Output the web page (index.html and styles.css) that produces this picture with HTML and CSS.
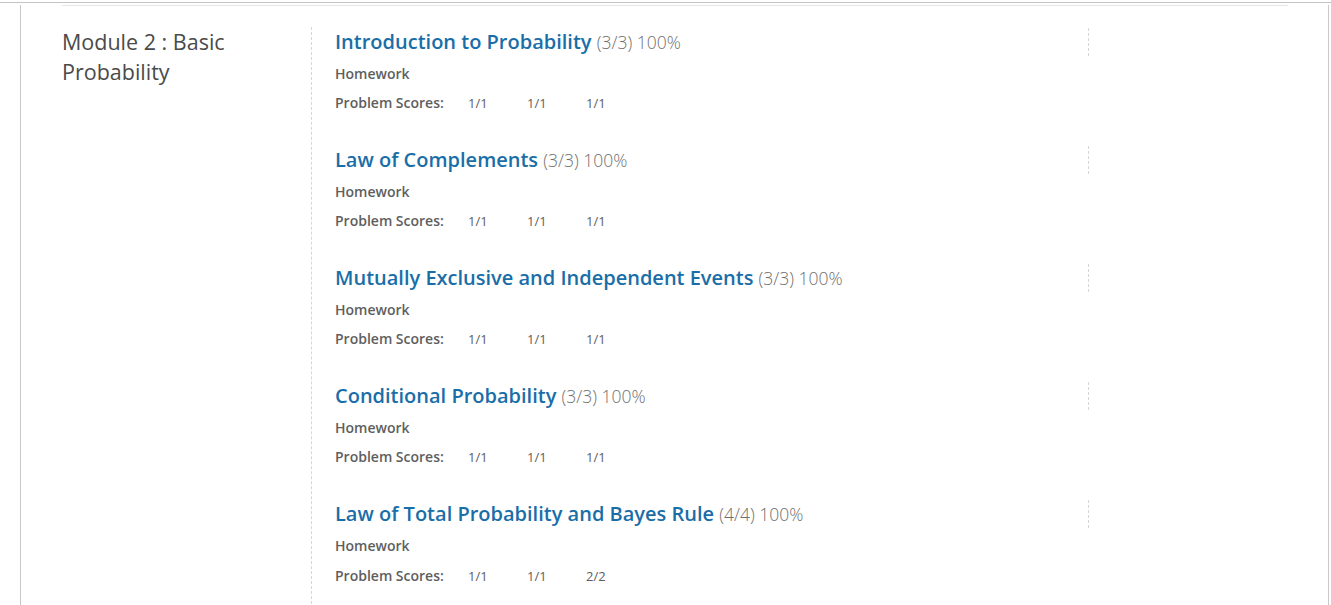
FILE: index.html
```html
<!DOCTYPE html>
<html>
<head>
<meta charset="utf-8">
<link rel="stylesheet" href="styles.css">
</head>
<body>
<div class="frame">
  <div class="panel">
    <div class="rule"></div>
    <div class="module">
      <h2 class="module-title">Module 2 : Basic Probability</h2>
      <div class="items">
        <div class="item">
          <div class="item-head"><a class="item-title">Introduction to Probability</a> <span class="count">(3/3) 100%</span></div>
          <div class="type">Homework</div>
          <div class="scores"><span class="label">Problem Scores:</span><span class="score">1/1</span><span class="score">1/1</span><span class="score">1/1</span></div>
        </div>
        <div class="item">
          <div class="item-head"><a class="item-title">Law of Complements</a> <span class="count">(3/3) 100%</span></div>
          <div class="type">Homework</div>
          <div class="scores"><span class="label">Problem Scores:</span><span class="score">1/1</span><span class="score">1/1</span><span class="score">1/1</span></div>
        </div>
        <div class="item">
          <div class="item-head"><a class="item-title">Mutually Exclusive and Independent Events</a> <span class="count">(3/3) 100%</span></div>
          <div class="type">Homework</div>
          <div class="scores"><span class="label">Problem Scores:</span><span class="score">1/1</span><span class="score">1/1</span><span class="score">1/1</span></div>
        </div>
        <div class="item">
          <div class="item-head"><a class="item-title">Conditional Probability</a> <span class="count">(3/3) 100%</span></div>
          <div class="type">Homework</div>
          <div class="scores"><span class="label">Problem Scores:</span><span class="score">1/1</span><span class="score">1/1</span><span class="score">1/1</span></div>
        </div>
        <div class="item">
          <div class="item-head"><a class="item-title">Law of Total Probability and Bayes Rule</a> <span class="count">(4/4) 100%</span></div>
          <div class="type">Homework</div>
          <div class="scores last"><span class="label">Problem Scores:</span><span class="score">1/1</span><span class="score">1/1</span><span class="score">2/2</span></div>
        </div>
      </div>
    </div>
  </div>
</div>
</body>
</html>
```
FILE: styles.css
```css
html, body {
  margin: 0;
  padding: 0;
  background: #fff;
  font-family: "Open Sans", "Liberation Sans", sans-serif;
  overflow: hidden;
}
.frame {
  margin-top: 2px;
  border-top: 1px solid #c4c4c4;
  height: 602px;
}
.panel {
  margin-left: 20px;
  width: 1309px;
  height: 602px;
  border-left: 1px solid #c8c8c8;
  border-right: 1px solid #c8c8c8;
  padding: 0 40px 0 41px;
  box-sizing: border-box;
}
.rule {
  height: 0;
  margin-top: 2px;
  border-top: 1px solid #e6e6e6;
}
.module {
  display: flex;
  margin-top: 21px;
}
.module-title {
  margin: 0;
  width: 249px;
  flex: none;
  font-size: 21.5px;
  line-height: 30px;
  font-weight: 400;
  color: #4a4a4a;
}
.items {
  border-left: 1px dashed #d6d6d6;
  padding: 1px 0 0 23px;
  width: 754px;
  flex: none;
}
.item {
  padding-bottom: 33px;
}
.item-head {
  height: 28px;
  line-height: 28px;
  border-right: 1px dashed #d6d6d6;
  white-space: nowrap;
}
.item-title {
  font-size: 20px;
  font-weight: 600;
  color: #1a6ea8;
}
.count {
  margin-left: 1px;
  font-size: 17.5px;
  font-weight: 300;
  color: #6f6f6f;
}
.type {
  margin-top: 8px;
  font-size: 14px;
  line-height: 20px;
  font-weight: 600;
  color: #5e5e5e;
}
.scores {
  margin-top: 9px;
  display: flex;
  align-items: baseline;
  font-size: 14px;
  line-height: 20px;
  color: #5e5e5e;
}
.scores.last {
  margin-top: 10px;
}
.label {
  width: 133px;
  font-weight: 600;
}
.score {
  width: 59px;
  font-size: 13px;
  font-weight: 400;
}
```
